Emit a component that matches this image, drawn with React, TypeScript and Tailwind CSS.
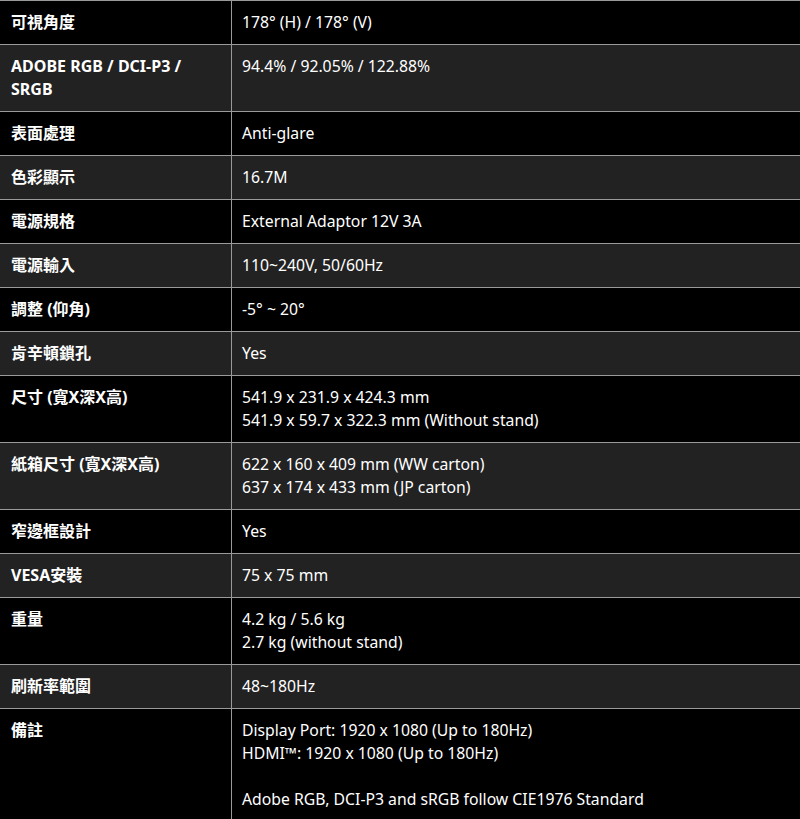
import React from "react";

const rows: { label: string; value: React.ReactNode[] }[] = [
  { label: "可視角度", value: ["178° (H) / 178° (V)"] },
  { label: "ADOBE RGB / DCI-P3 / SRGB", value: ["94.4% / 92.05% / 122.88%"] },
  { label: "表面處理", value: ["Anti-glare"] },
  { label: "色彩顯示", value: ["16.7M"] },
  { label: "電源規格", value: ["External Adaptor 12V 3A"] },
  { label: "電源輸入", value: ["110~240V, 50/60Hz"] },
  { label: "調整 (仰角)", value: ["-5° ~ 20°"] },
  { label: "肯辛頓鎖孔", value: ["Yes"] },
  { label: "尺寸 (寬X深X高)", value: ["541.9 x 231.9 x 424.3 mm", "541.9 x 59.7 x 322.3 mm (Without stand)"] },
  { label: "紙箱尺寸 (寬X深X高)", value: ["622 x 160 x 409 mm (WW carton)", "637 x 174 x 433 mm (JP carton)"] },
  { label: "窄邊框設計", value: ["Yes"] },
  { label: "VESA安裝", value: ["75 x 75 mm"] },
  { label: "重量", value: ["4.2 kg / 5.6 kg", "2.7 kg (without stand)"] },
  { label: "刷新率範圍", value: ["48~180Hz"] },
  {
    label: "備註",
    value: [
      "Display Port: 1920 x 1080 (Up to 180Hz)",
      "HDMI™: 1920 x 1080 (Up to 180Hz)",
      "\u00a0",
      "Adobe RGB, DCI-P3 and sRGB follow CIE1976 Standard",
    ],
  },
];

export default function App() {
  return (
    <div
      className="w-[800px] h-[819px] overflow-hidden bg-black text-white text-[16px] leading-[23px]"
      style={{ fontFamily: '"Segoe UI", "Noto Sans", "Noto Sans CJK TC", sans-serif' }}
    >
      {rows.map((r, i) => (
        <div
          key={i}
          className={`grid grid-cols-[232px_1fr] border-t border-[#9a9a9a] ${
            i % 2 === 1 ? "bg-[#222222]" : "bg-black"
          }`}
        >
          <div className="pl-[11px] pr-[10px] pt-[10px] pb-[10px] font-bold border-r border-[#9a9a9a]">
            {r.label}
          </div>
          <div className="px-[10px] pt-[10px] pb-[10px] text-[15.75px]">
            {r.value.map((v, j) => (
              <div key={j}>{v}</div>
            ))}
          </div>
        </div>
      ))}
    </div>
  );
}
